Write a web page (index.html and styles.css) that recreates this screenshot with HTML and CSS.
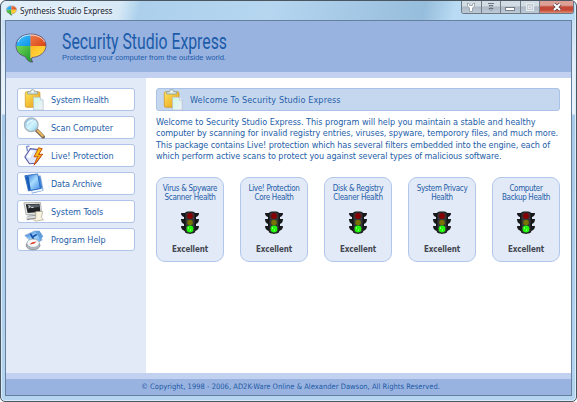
FILE: index.html
```html
<!DOCTYPE html>
<html lang="en">
<head>
<meta charset="utf-8">
<title>Synthesis Studio Express</title>
<link rel="stylesheet" href="styles.css">
</head>
<body>
<svg class="defs" width="0" height="0">
  <defs>
    <linearGradient id="gold" x1="0" y1="0" x2="1" y2="1"><stop stop-color="#ffe65c"/><stop offset="1" stop-color="#e69a14"/></linearGradient>
    <linearGradient id="sheet" x1="0" y1="0" x2="1" y2="1"><stop stop-color="#c8fae4"/><stop offset="1" stop-color="#f4f0fa"/></linearGradient>
    <linearGradient id="glass" x1="0" y1="0" x2="1" y2="1"><stop stop-color="#6cb4e8"/><stop offset=".5" stop-color="#d4f4ff"/><stop offset="1" stop-color="#8cd0ee"/></linearGradient>
    <linearGradient id="blue" x1="0" y1="0" x2="1" y2="1"><stop stop-color="#1c62cc"/><stop offset=".5" stop-color="#a8dcff"/><stop offset="1" stop-color="#3c84e0"/></linearGradient>
    <linearGradient id="bolt" x1="0" y1="0" x2="1" y2="1"><stop stop-color="#ffdf20"/><stop offset="1" stop-color="#f08a08"/></linearGradient>
    <linearGradient id="q1" x1="0" y1="0" x2="1" y2="1"><stop stop-color="#55c8ff"/><stop offset="1" stop-color="#0894e8"/></linearGradient>
    <linearGradient id="q2" x1="0" y1="0" x2="1" y2="1"><stop stop-color="#f08050"/><stop offset="1" stop-color="#d84010"/></linearGradient>
    <linearGradient id="q3" x1="0" y1="0" x2="1" y2="1"><stop stop-color="#78dc58"/><stop offset="1" stop-color="#18962c"/></linearGradient>
    <linearGradient id="q4" x1="0" y1="0" x2="1" y2="1"><stop stop-color="#ffb820"/><stop offset="1" stop-color="#ffe850"/></linearGradient>
    <clipPath id="bubble"><path d="M16 1C25 1 31 6 31 12.500C31 19 25 24 17 24.500C16 26.500 17 28 18 29C14 29.500 12 27 10 23.500C4 22 1 18 1 12.500C1 6 7 1 16 1Z"/></clipPath>
    <symbol id="logo" viewBox="0 0 32 30">
      <g clip-path="url(#bubble)"><path fill="url(#q1)" d="M0 0h15.500v13H0z"/><path fill="url(#q2)" d="M15.500 0H32v13H15.500z"/><path fill="url(#q3)" d="M0 13h15.500v17H0z"/><path fill="url(#q4)" d="M15.500 13H32v13H15.500z"/><path fill="#24862c" d="M15.500 25h4v5h-4z"/></g>
      <path fill="none" stroke="#5f4e72" stroke-width=".8" d="M16 1C25 1 31 6 31 12.500C31 19 25 24 17 24.500C16 26.500 17 28 18 29C14 29.500 12 27 10 23.500C4 22 1 18 1 12.500C1 6 7 1 16 1Z"/>
      <path fill="none" stroke="#fff" stroke-opacity=".75" d="M3 9C5 4 10 2 16 2s12 3 13.500 7"/>
    </symbol>
    <symbol id="clip" viewBox="0 0 22 24">
      <rect x="1.500" y="3" width="16" height="17" rx="1.500" fill="url(#gold)" stroke="#c98b18" stroke-width=".7"/>
      <path d="M4 5.500V3h3c0-3 5-3 5 0h3v2.500z" fill="#dbe5e2" stroke="#7f9898" stroke-width=".8"/><circle cx="9.500" cy="2.800" r="1" fill="#fff"/>
      <path d="M10.500 9h7.500l3 3v11H10.500z" fill="url(#sheet)" stroke="#b3bad0" stroke-width=".7"/><path d="M18 9v3h3" fill="#fff" stroke="#aebacb" stroke-width=".7"/>
    </symbol>
    <symbol id="search" viewBox="0 0 24 24">
      <path d="m14.500 14 7.500 7.500" stroke="#766a62" stroke-width="4" stroke-linecap="round"/><path d="m16 15 5.500 5.500" stroke="#e9b659" stroke-width="2.300" stroke-linecap="round"/>
      <circle cx="9" cy="8.500" r="7.400" fill="url(#glass)" stroke="#a9b6c0" stroke-width="1.500"/><path d="M4.500 8c1-3 3-4 6-4" fill="none" stroke="#f4fdff" stroke-width="1.500"/>
    </symbol>
    <symbol id="live" viewBox="0 0 24 24">
      <path d="M5 7 4 2l3-1" fill="none" stroke="#7e91cd" stroke-width="1.600"/>
      <path d="m8 4 8 1 3 8-5 7-7 .5L2 13z" fill="#dfe6fc" stroke="#5d60a8" stroke-width="1.200"/><path d="m8 6 4 .5-5 8-3-2z" fill="#fff"/>
      <path d="m17 3-5 10 4-.5-4 9.500 9.500-12-4.500.5L21 4z" fill="url(#bolt)" stroke="#c6460b" stroke-width="1"/>
    </symbol>
    <symbol id="archive" viewBox="0 0 24 24">
      <path d="m6 5 13-2 3 16-12 3z" fill="#3f84d8" stroke="#8ba9d8" stroke-width=".8"/>
      <path d="m9 19 12-2 .5 2-12 2.500z" fill="#eef5ff"/><path d="m2 3 14-2 3 16-13 2.500z" fill="url(#blue)" stroke="#2463b8" stroke-width=".9"/><path d="m3 4 3-.5 2.500 15-2.500.5z" fill="#195cb8"/>
    </symbol>
    <symbol id="tools" viewBox="0 0 24 24">
      <path d="m1 2 18-.5 1.500 12.500L3.500 15z" fill="#ecece8" stroke="#94989a" stroke-width=".8"/><path d="m3 3.500 15-.5 1 9L5 13z" fill="#202427"/><path d="m5 4 12-.5.500 3L6 8z" fill="#596067"/>
      <path d="m6 5 2 1-2 1.500M9 7h2.500" fill="none" stroke="#fff" stroke-width=".9"/><path d="m5 16 10-1 2 4-13 2z" fill="#8b9092"/><path d="m4 17 10-1 1.500 2L3 19.500z" fill="#d9dbdc"/>
      <path d="M14 11.500h7.500L20 18l2.500 2.500L13 22l-2-2 3-1z" fill="#f8f3df" stroke="#a69e8e" stroke-width=".7"/>
    </symbol>
    <symbol id="help" viewBox="0 0 24 24">
      <path d="m2 7 11-5 8 10-9 5z" fill="url(#blue)" stroke="#99afd0" stroke-width=".8"/><path d="m13 2 5 0 4 6-3 4z" fill="#609fda"/><path d="m8 5 4 7M10 9l5-3" stroke="#1751a8" stroke-width="1.800"/>
      <ellipse cx="11" cy="17.800" rx="7.500" ry="5" fill="#aeb5bd" stroke="#8a929a"/><ellipse cx="11" cy="15.500" rx="6.700" ry="4.600" fill="#f5f8fa" stroke="#929ca5" stroke-width=".8"/>
      <path d="m7 17 3-2.500 5-1-3 2.500z" fill="#e24430"/>
    </symbol>
    <symbol id="signal" viewBox="0 0 20 24">
      <path d="M1 2h18q0 3-3 4v2h3q0 4-3 5v2h3q0 4-4 5l-2 1-3 2-3-2-2-1q-4-1-4-5h3v-2q-3-1-3-5h3V6Q1 5 1 2z" fill="#17191a"/><rect x="5" y="1" width="10" height="21" rx="2.500" fill="#343638" stroke="#101213"/>
      <circle cx="10" cy="5" r="3" fill="#850006"/><circle cx="10" cy="11.500" r="2.800" fill="#777300"/><circle cx="10" cy="18" r="3.400" fill="#20fa08"/><path d="M8 17h1m1 2h1" stroke="#c9ffc0"/>
    </symbol>
  </defs>
</svg>
<div class="window">
  <header class="titlebar">
    <svg class="mini"><use href="#logo"/></svg><span class="caption">Synthesis Studio Express</span>
    <div class="controls">
      <span class="ctl"><svg viewBox="0 0 10 10"><path d="M1.500 1v3l2 2v3.500h3V6l2-2V1L6.500 2v1.500h-3V2z" fill="#fff" stroke="#777f89" stroke-width=".6"/></svg></span>
      <span class="ctl"><svg viewBox="0 0 10 10"><path d="M2 1.500h6M3 3.500h4L5 5.500zM3 6.500h4L5 8.500z" fill="#fff" stroke="#606a76" stroke-width=".9"/></svg></span>
      <span class="ctl"><svg viewBox="0 0 10 10"><rect x=".6" y="5.500" width="8.800" height="3" fill="#fff" stroke="#5e6670" stroke-width=".8"/></svg></span>
      <span class="ctl"><svg viewBox="0 0 10 10"><rect x="1.500" y="1.500" width="7" height="7" fill="#c4ccd4" stroke="#e6ebf0"/><rect x="3.500" y="4" width="3" height="2.500" fill="none" stroke="#edf1f5" stroke-width=".8"/></svg></span>
      <span class="ctl close"><svg viewBox="0 0 10 10"><path d="m2 2 6 6m0-6L2 8" stroke="#59414a" stroke-width="3.600"/><path d="m2 2 6 6m0-6L2 8" stroke="#fff" stroke-width="2.100"/></svg></span>
    </div>
  </header>
  <div class="client">
    <div class="banner">
      <svg class="logo"><use href="#logo"/></svg>
      <svg class="brand" viewBox="0 0 170 44"><text class="brand-name" x="0" y="21" textLength="165" lengthAdjust="spacingAndGlyphs">Security Studio Express</text><text class="brand-tag" x="0" y="32" textLength="164" lengthAdjust="spacingAndGlyphs">Protecting your computer from the outside world.</text></svg>
    </div>
    <div class="body">
      <nav class="sidebar">
        <a class="item"><svg><use href="#clip"/></svg><span class="tight">System Health</span></a>
        <a class="item"><svg><use href="#search"/></svg><span>Scan Computer</span></a>
        <a class="item"><svg><use href="#live"/></svg><span>Live! Protection</span></a>
        <a class="item"><svg><use href="#archive"/></svg><span class="tight">Data Archive</span></a>
        <a class="item"><svg><use href="#tools"/></svg><span>System Tools</span></a>
        <a class="item"><svg><use href="#help"/></svg><span>Program Help</span></a>
      </nav>
      <main class="main">
        <h1 class="heading"><svg><use href="#clip"/></svg><span>Welcome To Security Studio Express</span></h1>
        <p class="intro"><span class="l1">Welcome to Security Studio Express. This program will help you maintain a stable and healthy</span><span class="l2">computer by scanning for invalid registry entries, viruses, spyware, temporory files, and much more.</span><span class="l3">This package contains Live! protection which has several filters embedded into the engine, each of</span><span class="l4">which perform active scans to protect you against several types of malicious software.</span></p>
        <div class="cards">
          <section class="card"><h2>Virus &amp; Spyware<br>Scanner Health</h2><svg><use href="#signal"/></svg><b>Excellent</b></section>
          <section class="card"><h2>Live! Protection<br>Core Health</h2><svg><use href="#signal"/></svg><b>Excellent</b></section>
          <section class="card"><h2>Disk &amp; Registry<br>Cleaner Health</h2><svg><use href="#signal"/></svg><b>Excellent</b></section>
          <section class="card"><h2>System Privacy<br>Health</h2><svg><use href="#signal"/></svg><b>Excellent</b></section>
          <section class="card"><h2>Computer<br>Backup Health</h2><svg><use href="#signal"/></svg><b>Excellent</b></section>
        </div>
      </main>
    </div>
    <footer class="footer"><span>© Copyright, 1998 - 2006, AD2K-Ware Online &amp; Alexander Dawson, All Rights Reserved.</span></footer>
  </div>
</div>
</body>
</html>
```
FILE: styles.css
```css
* { box-sizing: border-box; }
body { margin: 0; background: #fff; font-family: "DejaVu Sans Condensed", "DejaVu Sans", sans-serif; font-stretch: condensed; color: #2560a8; overflow: hidden; }
.defs { display: block; }
svg { display: block; flex: none; }
.window {
  width: 577px; height: 402px; padding: 0 5px 5px; display: flex; flex-direction: column;
  border: 1px solid #4c5660; border-radius: 6px 6px 5px 5px;
  background: linear-gradient(#b5d4ee 0, #c7dff4 20px, #e4eff9 65px, #eaf3fb 113px, #a9cbe9 114px, #b4d4ef 100%);
  box-shadow: inset 0 0 0 1px #d9ecfa;
}
.titlebar { height: 19px; flex: none; display: flex; margin: 0 -4px; background: linear-gradient(105deg, #e1eff9 0, #d7e9f6 115px, #acd0ec 135px, #b6d6f0 260px, #96bddc 410px, #b9dbf3 440px); border-radius: 5px 5px 0 0; }
.mini { width: 11px; height: 11px; margin: 4px 3px 0 4px; }
.caption { font: 8.200px/19px "Noto Sans", sans-serif; color: #182431; letter-spacing: -.1px; text-shadow: 0 0 4px #fff, 0 0 6px #fff; }
.controls { display: flex; margin-left: auto; margin-right: 1px; height: 13px; border: 1px solid #6e7985; border-top: 0; border-radius: 0 0 3px 3px; overflow: hidden; }
.ctl { width: 19.500px; border-right: 1px solid #727d88; display: flex; align-items: center; justify-content: center; background: linear-gradient(#d2dce5 0 40%, #aebac6 50%, #bccad7); }
.ctl svg { width: 10px; height: 10px; }
.close { width: 33px; border: 0; background: linear-gradient(#dda097 0 35%, #c24838 50%, #c44834 75%, #df8f75); }
.client { flex: 1; min-height: 0; border: 1px solid #66809f; display: flex; flex-direction: column; margin: 0 -1px 0; background: #fff; }
.banner { height: 57px; flex: none; background: #99b3e0; border-bottom: 6px solid #c2d1f0; display: flex; }
.logo { width: 32px; height: 30px; margin: 12px 15px 0 9px; }
.brand { width: 170px; height: 44px; margin-top: 7px; overflow: visible; }
.brand-name { font: 21.500px Roboto, sans-serif; fill: #1b5baa; }
.brand-tag { font: 7.200px "Liberation Sans", sans-serif; fill: #1b5baa; }
.body { flex: 1; display: flex; min-height: 0; }
.sidebar { width: 140px; flex: none; background: #e2e9f7; padding: 10px 11px 0; display: flex; flex-direction: column; gap: 5px; }
.item { height: 23px; border: 1px solid #afc4e8; border-radius: 3px; background: #fff; display: flex; align-items: center; font-size: 9px; letter-spacing: -.04px; }
.tight { letter-spacing: -.13px; }
.item svg { width: 22px; height: 22px; margin: 0 6px 0 5px; }
.main { flex: 1; min-width: 0; padding: 10px 10px 0; }
.heading { margin: 0; width: 404px; height: 23px; border: 1px solid #a9c2e6; border-radius: 3px; background: #c5d7ef; display: flex; align-items: center; font-size: 9px; font-weight: 400; letter-spacing: .13px; }
.heading svg { width: 22px; height: 22px; margin: 0 6px 0 5px; }
.intro { margin: 6px 0 0; font-size: 9px; line-height: 11.250px; }
.intro span { display: block; white-space: nowrap; }
.l1 { letter-spacing: -.03px; }
.l2 { letter-spacing: -.07px; }
.l3 { letter-spacing: -.085px; }
.l4 { letter-spacing: -.07px; }
.cards { display: flex; gap: 16px; margin-top: 15px; }
.card { width: 68px; height: 85px; flex: none; border: 1px solid #b2c8eb; border-radius: 9px; background: #e2e9f7; display: flex; flex-direction: column; align-items: center; }
.card h2 { margin: 6px 0 0; font-size: 8px; line-height: 9px; height: 18px; font-weight: 400; text-align: center; white-space: nowrap; letter-spacing: -.32px; }
.card svg { width: 20px; height: 24px; margin-top: 9px; }
.card b { margin-top: 9px; font-size: 8px; line-height: 12px; letter-spacing: -.12px; color: #424750; }
.footer { height: 22px; flex: none; border-top: 6px solid #c2d1f0; background: #99b3e0; text-align: center; font-size: 7.500px; line-height: 16px; letter-spacing: .025px; color: #1c5aa6; padding-left: 4px; }
```
